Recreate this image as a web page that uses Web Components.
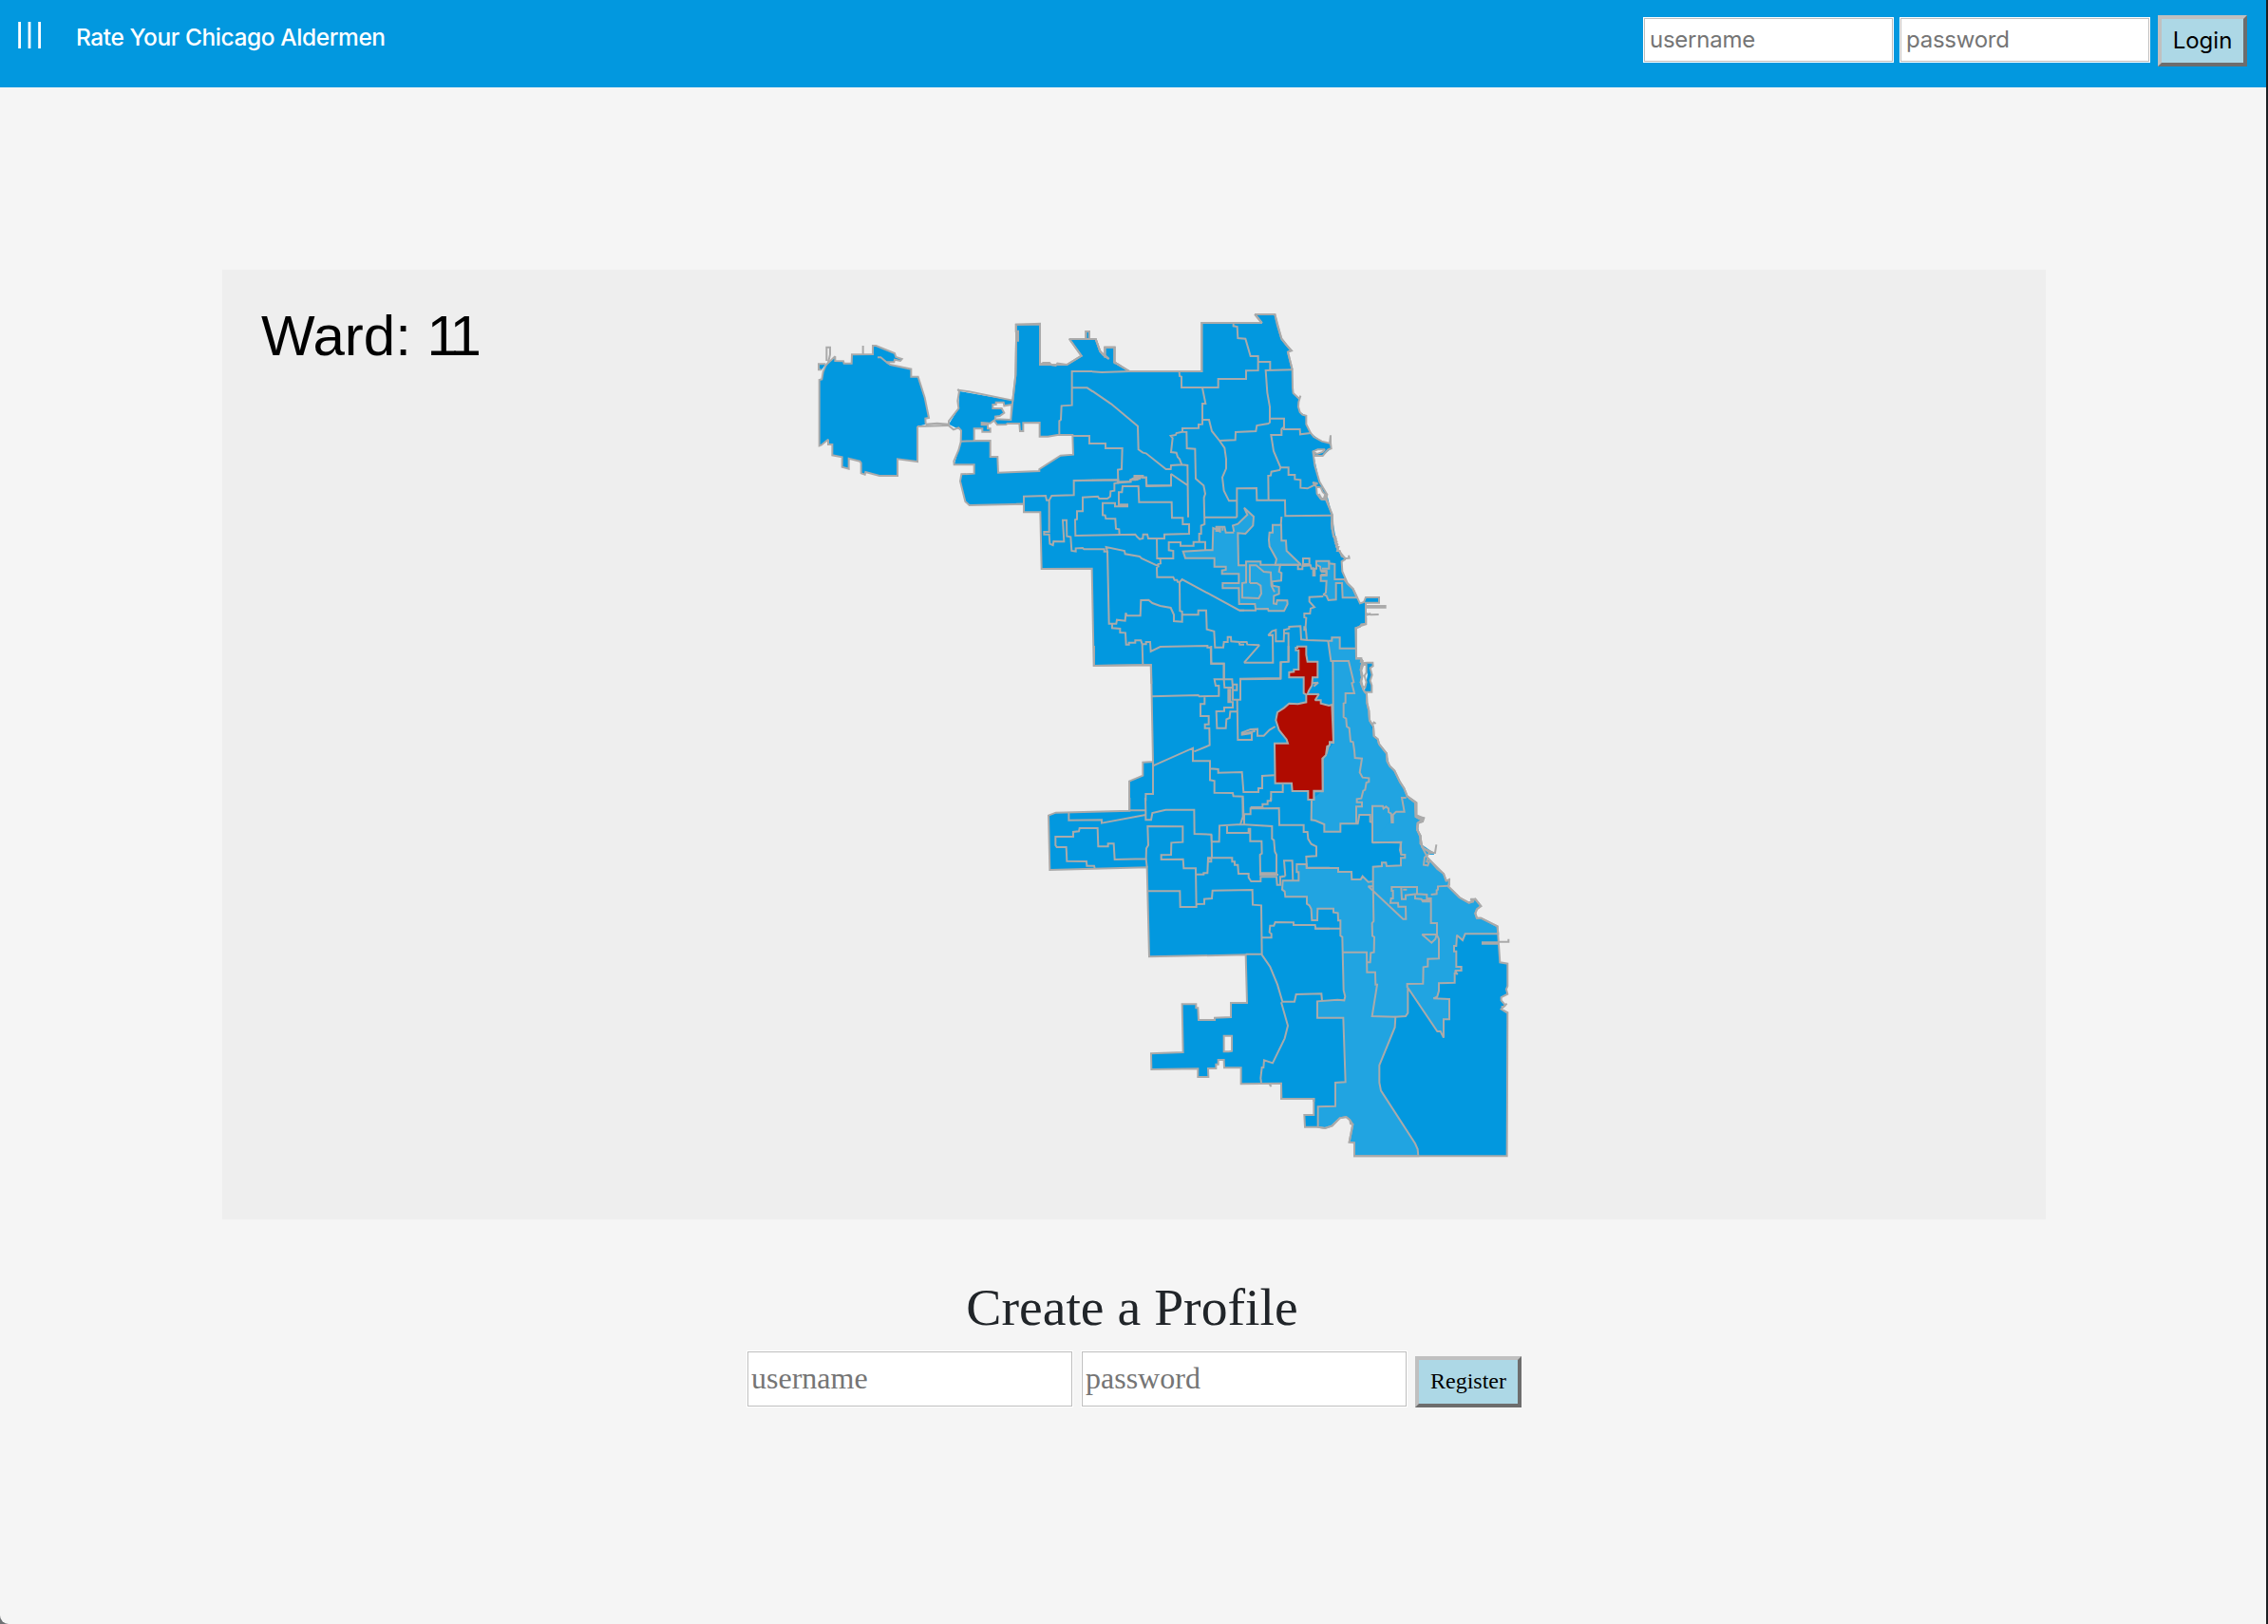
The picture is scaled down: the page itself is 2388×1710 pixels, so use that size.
<!DOCTYPE html>
<html lang="en">
<head>
<meta charset="utf-8">
<title>Rate Your Chicago Aldermen</title>
<style>
html,body{margin:0;height:100%}
body{background:#6f7174;overflow:hidden}
</style>
</head>
<body>
<ward-app></ward-app>
<script>
const define=(name,html,setup)=>customElements.define(name,class extends HTMLElement{
  connectedCallback(){
    if(this.shadowRoot)return;
    const root=this.attachShadow({mode:'open'});
    root.innerHTML=typeof html==='function'?html(this):html;
    if(setup)setup(root,this);
  }
});

/* Each tile holds its paths in thirds of a pixel, measured from its own x,y.
   land: [coast, closing edge], filled only when a closing edge is given;
   pale: lighter wards; line: ward borders; hole: gaps in the land */
const tiles=[
{x:850,y:320,
 land:[
 ['M348,387 V498 L285,490 V543 H228 L184,531 L182,539 L170,535 V503 L166,497 L131,488 V521 L110,515 V484 L79,478 V444 H66 V428 L44,446 L38,448 V240 L46,238 L50,215 L58,195 L64,188 L88,166 V180 L114,181 L116,188 H140 L141,160 L207,159 V132 H217 L276,156 L280,168 L299,174 L294,180 L276,176 L274,184 H250 L262,192 L328,206 V230 H350 L371,296 L384,360 L373,362 L374,380','L348,387Z'],
 ['M222,169 H232 L250,184',''],
 ['M58,190 L36,190 V208 H46',' L58,190Z'],['M61,180 V137 H72 V160 L66,185',''],['M176,132 V160',''],
 ['M990,196 L970,184 V137 H940 V162 L953,174 M940,165 L925,150 L911,111 H891 V87 H880 V111 H828 L866,164 L820,192 L790,188 L785,195 L772,193 L765,186 H745 L735,192 V62 L659,65 V86 H666 V116 H660 L658,225 L649,305 L510,277 L478,272 L475,270 L480,276 L475,306 L478,330 L447,370 V385 L462,397 L478,391 L486,400 L485,436 L478,462 L463,497 L464,508 H527 V536 L487,538 L483,560 L493,600 L499,624 L512,636 L684,632',''],
 ['M880,112 V87 H891 V112','Z'],['M940,170 V137 H971 V190','Z'],
 ['M649,305 L658,225 L660,117 V65 H735 V192 L820,192 L866,164 L828,111 H911 L925,150 L940,164 L953,174','L970,184 L990,196 V690 H737 V657 H684 V632 L512,636 L499,624 L483,560 L487,538 L527,536 V508 H464 L485,436 L486,400 L447,380 L478,330 L480,276 Z']],
 line:'M485,434 L578,432 M649,305 L643,364 M900,213 H836 V320 L803,322 L801,366 L796,370 V414 M836,265 H884 L902,277 M840,417 H891 V441 H902 M842,559 L902,557 M447,384 L348,387 M374,380 L410,377 L447,380',
 hole:'M586,318 H596 V311 H620 L622,322 L646,318 L643,366 L594,364 V356 L608,354 L622,344 L614,330 H586Z M527,394 H553 V404 H578 V394 H570 V382 H551 V375 L578,377 L590,368 L600,382 L628,381 L632,378 H670 L672,402 H682 V376 L734,375 V419 L760,419 L790,414 H838 L840,476 L800,479 L733,522 V528 L603,533 L601,483 H578 V432 H527Z'},
{x:1150,y:320,
 land:[['M0,111 H11 L25,150 L35,162 L50,172 M40,164 V137 H71 L70,184 L118,213 H346 V60 H536 L514,33 H577 L585,68 L598,110 L615,132 L630,148 L618,152 L632,208 L633,265 L635,282 L654,300 L658,290 L652,310 L651,325 L656,342 L664,350 L676,353 V380 L690,408 L700,420 L725,434 L750,440 L753,415 V440 L755,457 L745,460 L728,480 L705,480 L697,464 L703,510 L718,562 L742,602 L740,615 L757,665 V710 L766,740 L775,775 L800,805',''],
 ['M70,184 L118,213 H346 V60 H536 L514,33 H577 L598,110 L628,147 L618,152 L632,208','L635,282 L654,297 L651,322 L656,342 L676,353 V380 L690,408 L725,434 L750,440 L755,457 L728,480 L700,480 L718,562 L742,602 L757,665 L775,775 L800,805 V810 H0 V111 H11 L25,150 L40,164 H70Z']],
 line:'M0,214 L30,216 L118,213 H275 L276,228 L282,230 V264 H398 V237 H486 V211 L524,210 V165 H500 L484,110 L460,108 L458,72 L446,70 V60 M524,183 H562 V208 M632,208 L548,210 L553,280 L561,325 V374 L556,378 L520,384 L517,402 L453,405 L452,430 L402,432 M348,265 L358,315 H348 V380 L336,381 V392 L285,393 V404 L298,405 L299,456 L325,458 L327,552 L352,574 L357,600 L353,612 L355,698 M285,404 L266,408 L264,414 L248,417 L254,424 L249,468 L266,470 L270,484 L276,490 L283,508 L249,510 L248,522 H233 L170,472 L160,470 L146,460 L144,386 L60,316 L0,275 M283,508 L301,510 L303,674 M349,366 H369 L378,402 L402,432 L418,455 L423,490 V520 L411,548 L416,590 L432,622 H457 M560,362 H606 V396 H656 L657,412 L690,408 M604,390 L598,396 V414 H565 L573,465 L595,517 L592,525 L566,530 L564,542 L556,543 L557,620 M595,517 H620 V540 H640 V554 L658,556 V581 L680,583 L712,567 L697,564 L708,578 M457,674 V583 L519,582 L520,620 H609 L610,670 L755,668 M355,674 H457 M301,573 L249,537 V574 L172,576 L171,548 H160 V543 H134 V555 H146 M134,549 L120,556 L119,562 L82,565 L81,524 L93,522 L95,456 H42 V441 H0 M0,557 L80,556',
 hole:'M698,466 L712,460 L735,460 L728,468 L710,474Z M708,578 L722,580 L728,594 L736,602 L732,614 L722,616 L710,600Z'},
{x:1070,y:500,
 land:[['M0,92 H24 V118 H76 L80,297 L239,296 L245,603 L425,600 L427,660','H720 V0 H0Z']],
 line:'M24,92 V68 L93,66 L96,80 H104 L112,66 L182,64 V18 L322,16 V25 L310,27 V50 L298,52 L297,68 L288,75 H262 L258,68 L210,71 V115 H192 V140 L186,142 L187,192 L376,188 L382,196 L390,203 L400,201 L401,188 H414 L417,201 H468 V188 L546,186 V156 H526 V136 H492 L491,86 H388 L386,36 H336 L334,55 H324 V94 H351 V100 H312 V89 H273 V127 L281,128 L283,138 L313,139 L315,170 L325,172 L326,188 M104,80 V180 H88 V188 H104 L106,218 L116,222 L118,210 L151,211 L147,143 H159 L160,194 L172,196 L175,240 L188,242 V232 L210,231 L214,235 H278 V242 H288 L284,228 L342,240 L344,250 L390,258 L396,264 L452,290 M288,240 L293,470 H316 L318,458 L344,461 L346,436 L350,445 H392 L394,396 L418,395 L430,405 L455,414 L488,420 L498,442 V462 L524,464 V442 H575 V428 H600 L602,488 L625,494 L628,545 H654 L656,528 H668 V512 H678 L679,526 L704,528 L706,536 H720 M303,472 V484 L328,486 V498 L345,499 L347,536 H356 V530 H376 V523 H394 L398,535 L400,600 M398,535 H410 V528 H423 L425,558 L455,543 L604,540 V545 H614 L616,596 H656 V645 M444,201 L445,264 H496 V240 L482,238 V213 H519 V224 H560 V212 H597 V240 M455,266 L456,280 L448,282 L444,294 L445,323 H496 L500,332 H508 L510,338 H516 L517,430 L524,432 V442 M517,338 L524,330 L705,428 H720 M595,156 L584,160 V186 H578 V210 M322,22 H362 V16 H376 V8 H410 L411,34 H491 M374,4 H390 V12 H374Z'},
{x:1270,y:520,
 land:[['M356,0 L366,18 L374,18 L382,0 M378,18 L398,65 L396,95 L402,135 H410 L404,142 H412 L405,150 H414 L407,158 H416 L410,168 H418 L414,180 H422 L428,197 L440,204 L452,203 L450,194 M440,206 L428,214 L430,245 L446,282 L464,300 L486,346 L498,342 L504,327 H546 V344 H504 V354 H566 V359 H504 V378 L520,382 L545,381 M520,378 L504,384 V410 L490,412 L486,420 L472,424 L474,520 H490 L488,534',''],
 ['M398,65 L402,135','L414,180 L428,200 L440,205 L428,214 L430,245 L446,282 L464,300 L486,346 L498,342 L504,327 H546 V344 L504,346 V410 L486,420 L472,424 L474,520 L486,530 V600 H0 V0 H372Z']],
 pale:['M88,120 L84,100 L100,95 L130,66 L120,44 L150,72 L148,100 L124,126 L100,124 L102,226 H126 V214 H172 V224 H234 L230,246 L238,250 L237,274 L208,277 L210,290 L230,294 V316 L214,322 L213,346 L222,348 L224,336 L256,337 L257,348 L246,370 H197 L195,363 L156,364 L154,348 H104 L103,298 H52 V282 H103 V253 H50 V242 L62,240 V230 H26 V203 H-66 L-73,182 L0,178 H20 L22,108 L32,112 V104 H58 L62,122 H88','M210,98 H237 L238,148 H252 L254,180 L300,224 H218 L222,206 L200,166 L198,145 L200,122 H210Z','M348,212 H388 V220 L406,222 V270 H436 L446,284 L464,300 L476,328 H431 L429,282 H410 V334 L386,336 L380,322 L370,318 L378,312 L380,275 H362 V258 H380 V242 H362 L360,230 L348,224Z'],
 line:'M32,108 V120 M38,106 V120 M44,106 V122 M52,106 V116 M138,282 V226 H158 L182,246 L204,248 L206,290 L216,310 M126,228 V280 L114,282 V328 L166,330 L174,315 L172,290 L160,282 H138 M105,368 H156 V362 M236,98 L238,72 M234,224 L290,224 V238 H304 V228 L330,226 L332,236 H348 V224 M306,204 H326 V222 H306Z M338,232 V258 H343 V234 M362,246 H380 V255 H362 M388,212 V236 H366 M370,324 L326,326 V340 L342,358 L330,362 L328,378 H310 V390 L316,392 L314,420 L318,462 M310,418 V430 H318 M385,464 L318,462 L300,460 L298,418 L262,420 V426 L246,430 V440 L260,440 V530 L236,532 L235,584 L107,586 M246,440 L245,466 H220 V430 L208,434 L196,447 L210,446 L211,533 H120 L168,478 L130,476 L128,468 H106'},
{x:1140,y:680,
 land:[['M36,0 V63 L216,61 L222,366 L190,368 V410 L147,428 V520','V600 H780 V0Z']],
 line:'M216,160 L365,156 L368,160 L430,158 V126 H420 L416,106 H472 L474,132 H448 L446,108 V56 H406 V0 M385,160 V184 H372 V222 H398 V248 H386 V260 H400 L401,314 L352,334 M222,379 L348,323 V364 H402 V424 L416,427 V464 L474,465 L476,475 L506,476 L508,530 M222,366 V468 H199 V490 M402,388 L428,390 V401 L503,399 L508,462 H555 V450 H567 V411 L605,409 M460,136 V178 H474 V195 H447 V206 L422,207 L424,260 H452 L454,232 L464,228 L466,208 H488 M466,136 V176 M472,140 H487 V122 H474 V170 H498 V104 L625,102 V52 L650,50 V0 M488,172 L490,297 H534 V276 L503,281 V274 L530,264 L552,263 V284 H572 L590,266 L608,255 M505,279 L545,269 M632,438 V462 H595 V490'},
{x:1330,y:650,
 land:[['M325,0 V22 L310,26 L294,34 V130 H308 L314,138 L308,165 L312,190 L308,205 L318,232 L327,242 L328,270 L334,295 L336,325 L348,345 L350,375 L362,385 L366,400 L390,430 L392,455 L400,470 L415,485 L432,520 L445,540 L455,565 L484,586 V625 L492,632 L507,634 L504,645 L488,650 L486,670 L497,690 V715 L510,732 L540,745','V750 H0 V0Z'],
 ['M320,236 H343 V215 L338,200 L344,182 L338,160 L347,154 L346,143 H328 L314,145','L330,180Z'],['M345,340 L350,332 L356,336','']],
 pale:['M205,74 H217 V64 H242 V98 H294 V130 H308 L314,138 L308,165 L312,190 L308,205 L318,232 L327,242 L328,270 L334,295 L336,325 L348,345 L350,375 L362,385 L366,400 L390,430 L392,455 L400,470 L415,485 L432,520 L445,540 L455,565 L484,586 V625 L507,634 L488,650 L486,670 L497,690 V715 L510,732 L540,745 M436,748 L434,712 L345,710 V648 L338,646 V624 H304 L299,652 H244 V677 H193 V654 L165,642 L152,640 L153,576 H160 V550 H188 V446 L200,430 L210,396 H222 L220,140 L214,138 L205,74'],
 palefill:'M205,74 H217 V64 H242 V98 H294 V130 H308 L312,190 L318,232 L327,242 L336,325 L350,375 L390,430 L400,470 L415,485 L455,565 L484,586 V625 L507,634 L488,650 L497,715 L540,745 V750 H436 L434,712 L345,710 V648 L338,646 V624 H304 L299,652 H244 V677 H193 V654 L152,640 V576 L188,548 V446 L222,396 L220,140 L214,138Z',
 red:'M103,96 H108 V92 H136 V118 L140,140 H172 V190 H156 L154,215 L144,232 L140,243 H176 L164,262 H182 V272 L208,279 L217,276 L222,394 H210 V404 L202,408 L198,436 L187,446 L188,548 H160 V576 H142 V549 H92 L90,524 H38 L36,398 H78 L74,386 L50,356 L40,325 L45,300 L66,286 L82,272 L110,274 L136,268 V244 L128,240 V190 H82 V174 L97,172 V165 H112 V104 L103,104Z',
 line:'M156,208 L174,206 L160,218 M217,138 H270 L286,205 L280,208 L288,240 H260 V270 L254,272 V315 L262,320 L264,345 L272,350 L276,392 L284,394 L288,420 L290,444 L312,446 L305,490 L314,506 L334,508 V520 L326,522 L322,545 L316,548 L310,572 L296,574 V584 H312 V598 H294 V654 M345,710 V596 H378 L380,604 L388,598 L396,604 V615 L404,620 L406,648 H410 V624 L420,614 H446 L438,570 H452',
 hole:'M316,150 H326 V175 L320,185 L326,205 L322,222 L314,218 L310,200 L314,185 L310,168Z'},
{x:1090,y:840,
 land:[['M298,0 V41 L65,47 L42,56 L46,228 L353,220 L360,502 L665,496 L669,648 H618 V693 L567,695 V702 H516 L514,664 H508 V652 H464 L467,804 L366,808 L367,858 L514,856 V882 H547 L546,855 H571 V842 H578 V828 H596 L597,853 H650 V904 L777,902 L778,951 H880 V960','H930 V0Z']],
 line:'M348,0 L349,40 H298 M349,40 V70 H366 L370,48 L412,38 H502 L503,114 L556,116 L557,139 M106,46 V71 L210,70 V80 L349,54 M188,222 L186,215 H163 L162,201 L100,200 L98,156 H68 L64,150 V123 H120 V108 L138,106 L140,96 H197 L199,154 H230 V145 H248 L251,195 L350,193 L351,160 L357,150 L355,90 L466,91 V140 L430,142 L429,180 L398,181 V195 L467,194 L469,223 H507 L509,345 H458 L457,295 H357 M353,220 L350,193 M557,116 L558,188 M557,139 H581 L582,88 L650,84 L748,90 V130 L754,134 L757,170 L762,180 V238 H711 L710,180 L716,176 L715,137 H679 V98 H674 V110 L606,111 V87 M509,242 H532 V238 H544 L546,190 H622 V202 H630 V212 H640 L642,240 H674 V252 L682,264 H712 V250 H762 L764,275 H774 V250 H784 M708,243 H768 M509,336 L534,335 V320 L558,318 L560,293 L686,291 L687,338 L714,340 L716,494 H665 M655,0 L656,60 L648,84 M660,82 V52 H680 V34 L770,33 L771,86 H848 V108 H860 L862,130 L872,146 L888,154 V184 L856,186 L858,221 H930 M744,0 V10 H734 V20 H718 V30 H680 M716,442 H746 V430 L740,425 L742,404 H754 L758,393 L816,394 V402 L884,402 L886,413 H930 M716,496 L742,534 L765,590 L781,644 H819 L824,621 L904,619 L906,641 M777,646 L798,720 L788,760 L750,838 L723,829 L721,852 H716 L712,886 L714,900 M790,248 H778 M790,248 L786,199 H812 L814,260 M548,192 H556 V202 H546Z M740,906 L746,912',
 hole:'M596,752 H621 V800 L612,802 H596Z'},
{x:1340,y:840,
 land:[['M430,0 L450,15 L452,60 L462,66 L476,68 L474,75 L460,80 L456,100 L466,122 L472,156 L497,174 H513 L517,148 L513,174 H497 L480,188 L477,212 L490,214 L494,204 L487,202 L490,190 L520,225 L540,240 L548,262 L558,258 V275 L555,280 L590,315 L620,332 L635,328 L625,320 L640,320 L658,342 L645,352 L640,365 L645,380 L658,380 L710,406 L718,520 L742,524 V595 L738,605 L742,620 L722,630 V640 L735,655 L722,668 L742,680 L740,1132 H258 V1090 L242,1088 L253,1032 L246,1030 L244,1018 L232,1008 L212,1012 L188,1036 L165,1044 L143,1040 H102 L100,1002 H130 V951 H27 V903 H0','V0Z']],
 pale:['M315,142 L406,140 L402,165 L406,180 H418 V190 H405 V214 L360,216 L358,205 H345 V216 L317,218 V264 L302,266 L284,248 L278,258 H250 L249,234 H207 V222 H107 V210 H76 V235 H82 V262 H32 L30,290 L38,296 L40,313 H108 V335 L116,340 L122,352 L124,387 H141 L142,350 H192 V362 L206,364 L207,388 H214 V436 L220,440 L224,608 L229,628 L226,640 L205,638 L141,643 V695 H223 L230,898 L198,900 V974 L143,976 V1040 L165,1044 L188,1036 L212,1012 L232,1008 L244,1018 L253,1032 L242,1088 L258,1090 V1132 H460 L458,1110 L450,1092 L342,925 L337,900 V845 L386,725 L388,692 L420,690 L427,680 V600 L520,738 H530 L540,758 V700 H558 V636 L508,634 L520,628 L525,610 V586 L575,584 V552 L584,558 L576,546 H596 V534 H580 V485 H573 V468 H580 L582,434 L600,450 L608,430 H712 L710,406 L658,380 H645 L640,365 L645,352 L658,342 L640,320 L620,332 L590,315 L555,280 L558,262 L548,262 L540,240 L490,190 L472,156 L466,122 L456,100 L460,80 L474,70 L452,60 L450,15 L430,0'],
 line:'M132,413 H214 M317,264 L319,390 L314,396 L315,436 L321,440 L320,488 L310,490 L308,520 H300 M220,488 H297 L298,551 H324 L325,590 H330 L314,690 L388,692 M317,280 H302 L412,383 H421 L420,344 H397 L396,332 H372 L374,318 H380 V294 H376 V282 H456 V304 L487,306 V318 H500 V396 H519 V434 L525,446 V508 L490,509 V533 L476,535 L475,587 L425,588 V600 M406,282 L408,320 H420 V308 L456,304 M412,290 H424 M450,308 V318 L470,320 L474,328 H500 M470,324 H498 M500,306 L518,304 V292 L522,290 V280 L555,278 M472,432 H518 L514,446 L502,458Z M660,457 H714 M660,461 H714 M714,455 H745 V446 M722,660 H730 L740,650 M730,672 L744,680'}
];

define('ward-map',()=>{
  const layer=fn=>tiles.map(t=>`<g transform="translate(${t.x-234} ${t.y-284}) scale(.33333)">${fn(t)}</g>`).join('');
  return `<style>
  :host{display:block;width:1920px;height:1000px;background:#eee}
  svg{display:block}
  path{fill:none;stroke:none;stroke-linejoin:miter;stroke-miterlimit:2}
  .land{fill:#0298df}.pale{fill:#21a4e1}.red{fill:#b00b00;stroke:#aaa;stroke-width:6}
  .hole{fill:#eee}.line{stroke:#aaa;stroke-width:6}
  text{font:60px "Liberation Sans",Arial,sans-serif;fill:#000}
  </style><svg width="1920" height="1000" viewBox="0 0 1920 1000" role="img" aria-label="Map of the wards">
  <text x="41" y="90" dx="0 0 0 0 0 0 0 -5">Ward: 11</text>
  ${layer(t=>t.land.filter(l=>l[1]).map(l=>`<path class="land" d="${l[0]} ${l[1]}"/>`).join(''))}
  ${layer(t=>t.palefill?`<path class="pale" d="${t.palefill}"/>`:(t.pale||[]).map(p=>`<path class="pale" d="${p}"/>`).join(''))}
  ${layer(t=>t.hole?`<path class="hole" d="${t.hole}"/>`:'')}
  ${layer(t=>t.land.map(l=>`<path class="line" d="${l[0]}"/>`).join('')+(t.pale||[]).map(p=>`<path class="line" d="${p}"/>`).join('')+`<path class="line" d="${t.line} ${t.hole||''}"/>`)}
  ${layer(t=>t.red?`<path class="red" d="${t.red}"/>`:'')}
  </svg>`;
});

define('text-field',el=>`<style>
  :host{display:block;box-sizing:border-box;width:var(--field-w);height:var(--field-h);padding:1px;background:#fff}
  input{box-sizing:border-box;display:block;width:100%;height:100%;margin:0;padding:var(--field-pad);border:1px solid #bebebe;
    border-radius:0;background:#fff;font:inherit;letter-spacing:inherit;outline:0}
  input::placeholder{color:#757575;opacity:1}
  </style><input type="text" placeholder="${el.getAttribute('placeholder')}">`);

define('push-button',`<style>
  :host{display:block}
  button{box-sizing:border-box;display:block;width:var(--btn-w);height:54px;margin:0;padding:0 0 2px;border:4px solid;
    border-color:#c0c0c0 #6d6d6d #6d6d6d #c0c0c0;background:#add8e6;color:#000;font:inherit;letter-spacing:inherit}
  </style><button type="button"><slot></slot></button>`);

define('menu-icon',`<style>:host{display:block}svg{display:block}</style>
  <svg width="26" height="28" viewBox="0 0 26 28"><path d="M1.6 0V28M12 0V28M22.6 0V28" stroke="#fff" stroke-width="2.8"/></svg>`);

define('site-header',`<style>
  :host{display:flex;box-sizing:border-box;height:92px;background:#0298df;align-items:flex-start;padding:0 20px 0 19px;
    font-family:Inter,"Open Sans",sans-serif}
  menu-icon{margin-top:23px}
  h1{margin:23px 0 0 35px;font-size:24.5px;line-height:32px;font-weight:500;color:#fff;letter-spacing:-.42px}
  form{display:flex;margin:16px 0 0 auto;align-items:flex-start;font-size:24px}
  text-field{margin:2px 6px 0 0;letter-spacing:-.25px;--field-w:264px;--field-h:48px;--field-pad:0 5px 2px}
  push-button{margin-left:2px;--btn-w:94px}
  </style><menu-icon></menu-icon><h1>Rate Your Chicago Aldermen</h1>
  <form><text-field placeholder="username"></text-field><text-field placeholder="password"></text-field><push-button>Login</push-button></form>`);

define('profile-form',`<style>
  :host{display:flex;flex-direction:column;align-items:center;font-family:"Liberation Serif","Times New Roman",serif}
  h2{margin:0 4px 12px 0;font-size:55.7px;line-height:67px;font-weight:400;color:#212529}
  form{display:flex;align-items:flex-end}
  text-field{margin-right:8px;font-size:32px;--field-w:344px;--field-h:60px;--field-pad:0 3px 2px}
  push-button{font-size:24px;--btn-w:112px}
  </style><h2>Create a Profile</h2>
  <form><text-field placeholder="username"></text-field><text-field placeholder="password"></text-field><push-button>Register</push-button></form>`);

define('ward-app',`<style>
  :host{display:flex;flex-direction:column;box-sizing:border-box;height:1710px;border-right:2px solid #1c1f22;
    border-bottom-left-radius:9px;background:#f5f5f5;overflow:hidden}
  ward-map{margin:192px 0 0 234px}
  profile-form{margin:59px 0 0 2px}
  </style><site-header></site-header><ward-map></ward-map><profile-form></profile-form>`);
</script>
</body>
</html>
